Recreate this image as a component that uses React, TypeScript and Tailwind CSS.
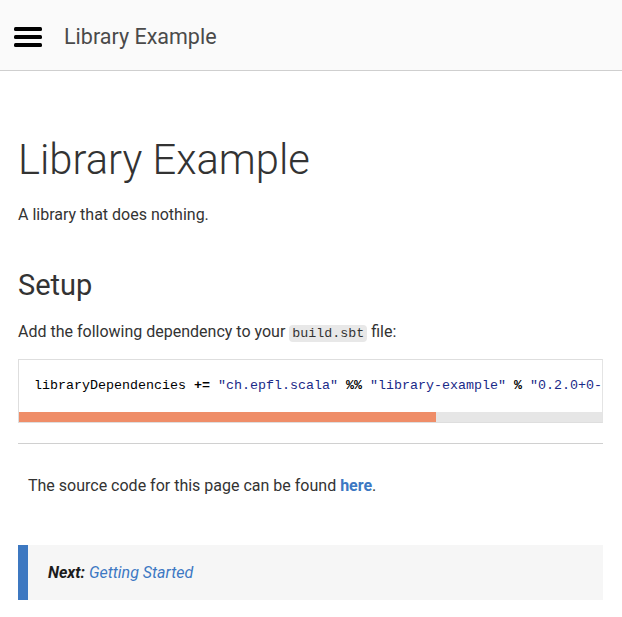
import React from 'react';

const Hamburger = () => (
  <svg width="28" height="20" viewBox="0 0 28 20" className="block">
    <rect x="0" y="0" width="28" height="4" rx="1.5" fill="#000" />
    <rect x="0" y="8" width="28" height="4" rx="1.5" fill="#000" />
    <rect x="0" y="16" width="28" height="4" rx="1.5" fill="#000" />
  </svg>
);

export default function App() {
  return (
    <div className="min-h-screen bg-white text-[#333] font-['Roboto',sans-serif]">
      <header className="h-[71px] flex items-center pt-[3px] bg-[#fafafa] border-b border-[#cfcfcf]">
        <div className="pl-[14px] pr-[22px]">
          <Hamburger />
        </div>
        <span className="text-[21.5px] text-[#4a4a4a] leading-none">Library Example</span>
      </header>

      <main className="pl-[18px] pr-[19px]">
        <h1 className="mt-[63px] text-[41.7px] font-light leading-[52px] text-[#333]">Library Example</h1>
        <p className="mt-[17px] text-[16px] leading-6">A library that does nothing.</p>

        <h2 className="mt-[40px] text-[29px] leading-9">Setup</h2>
        <p className="mt-[17px] text-[16px] leading-6">
          Add the following dependency to your{' '}
          <code className="font-['Liberation_Mono',monospace] text-[13.33px] bg-[#e8e8e8] px-[3px] py-[1px] rounded-sm">
            build.sbt
          </code>{' '}
          file:
        </p>

        <div className="mt-[13px] border border-[#dedede] border-r-[#e4e4e4] overflow-hidden">
          <pre className="pl-[15px] pt-[16px] pb-[16px] text-[13.33px] leading-5 font-['Liberation_Mono',monospace] whitespace-pre text-[#000]">
            libraryDependencies <b className="font-bold">+=</b>{' '}
            <span className="text-[#1a2a88]">"ch.epfl.scala"</span> <b className="font-bold">%%</b>{' '}
            <span className="text-[#1a2a88]">"library-example"</span> <b className="font-bold">%</b>{' '}
            <span className="text-[#1a2a88]">"0.2.0+0-3a2b6b2e"</span>
          </pre>
          <div className="h-[10px] bg-[#e6e6e6]">
            <div className="h-full w-[417px] bg-[#ef8d68]" />
          </div>
        </div>

        <hr className="mt-[20px] border-0 border-t border-[#d0d0d0]" />

        <p className="mt-[30px] pl-[10px] text-[16px] leading-6">
          The source code for this page can be found{' '}
          <a className="font-bold text-[#3c78c3]">here</a>.
        </p>

        <div className="mt-[47px] mb-[17px] flex bg-[#f6f6f6] border-l-[10px] border-[#3d78c1] h-[55px] items-center pl-[20px]">
          <span className="italic text-[16px]">
            <b className="font-bold text-[#1c1c1c]">Next:</b>{' '}
            <a className="text-[#3c78c3]">Getting Started</a>
          </span>
        </div>
      </main>
    </div>
  );
}
